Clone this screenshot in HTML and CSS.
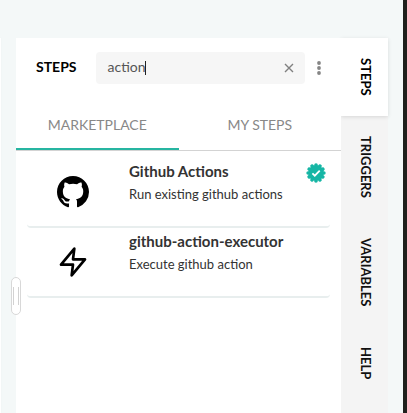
FILE: index.html
```html
<!DOCTYPE html>
<html lang="en">
<head>
<meta charset="utf-8">
<title>Steps</title>
<link rel="stylesheet" href="styles.css">
</head>
<body>
<div class="app">
  <div class="canvas-edge"></div>
  <aside class="panel">
    <button class="resize-handle" aria-label="Resize"></button>
    <header class="panel-header">
      <h1 class="panel-title">STEPS</h1>
      <div class="search">
        <span class="search-text">action</span><span class="caret"></span>
        <svg class="clear" viewBox="0 0 10 10"><path d="M1 1l8 8M9 1l-8 8"/></svg>
      </div>
      <svg class="more" viewBox="0 0 4 14"><circle cx="2" cy="2" r="1.9"/><circle cx="2" cy="7" r="1.9"/><circle cx="2" cy="12" r="1.9"/></svg>
    </header>
    <nav class="tabs">
      <div class="tab tab-active">MARKETPLACE</div>
      <div class="tab">MY STEPS</div>
    </nav>
    <div class="list">
      <article class="card">
        <svg class="card-icon" viewBox="0 0 16 16"><path d="M8 0C3.58 0 0 3.58 0 8c0 3.54 2.29 6.53 5.47 7.59.4.07.55-.17.55-.38 0-.19-.01-.82-.01-1.49-2.01.37-2.53-.49-2.69-.94-.09-.23-.48-.94-.82-1.13-.28-.15-.68-.52-.01-.53.63-.01 1.08.58 1.23.82.72 1.21 1.87.87 2.33.66.07-.52.28-.87.51-1.07-1.78-.2-3.64-.89-3.64-3.95 0-.87.31-1.59.82-2.15-.08-.2-.36-1.02.08-2.12 0 0 .67-.21 2.2.82.64-.18 1.32-.27 2-.27s1.36.09 2 .27c1.53-1.04 2.2-.82 2.2-.82.44 1.1.16 1.92.08 2.12.51.56.82 1.27.82 2.15 0 3.07-1.87 3.75-3.65 3.95.29.25.54.73.54 1.48 0 1.07-.01 1.93-.01 2.2 0 .21.15.46.55.38A8.01 8.01 0 0 0 16 8c0-4.42-3.58-8-8-8z"/></svg>
        <div class="card-body">
          <h2 class="card-title">Github Actions</h2>
          <p class="card-text">Run existing github actions</p>
        </div>
        <svg class="verified" viewBox="0 0 20 20"><circle class="seal" cx="10" cy="10" r="7.9" pathLength="12"/><path class="check" d="M6.4 10.4l2.4 2.3 4.9-5"/></svg>
      </article>
      <article class="card">
        <svg class="card-icon bolt" viewBox="0 0 24 24"><path d="M13 2L3 14h9l-1 8 10-12h-9z"/></svg>
        <div class="card-body">
          <h2 class="card-title">github-action-executor</h2>
          <p class="card-text">Execute github action</p>
        </div>
      </article>
    </div>
  </aside>
  <nav class="rail">
    <div class="rail-item rail-active">STEPS</div>
    <div class="rail-item">TRIGGERS</div>
    <div class="rail-item">VARIABLES</div>
    <div class="rail-item">HELP</div>
  </nav>
  <div class="window-edge"></div>
</div>
</body>
</html>
```
FILE: styles.css
```css
* { box-sizing: border-box; margin: 0; }
body { overflow: hidden; background: #f4f8f8; font-family: Lato, sans-serif; }
.app { display: flex; height: 413px; }
.canvas-edge { width: 1px; margin: 38px 15px 0 0; background: #fff; box-shadow: 0 0 2px #e9eeee; }
.panel { position: relative; width: 325px; margin-top: 38px; background: #fff; }
.panel-header { display: flex; align-items: center; height: 60px; padding-left: 20px; }
.panel-title { width: 60px; padding-bottom: 2px; font-size: 14px; font-weight: 700; line-height: 20px; color: #000; }
.search { display: flex; align-items: center; width: 209px; height: 32px; padding: 0 11px 0 11.5px; border-radius: 4px; background: #f6f6f6; font-size: 14px; line-height: 20px; color: #555; }
.search-text { margin-top: -2px; }
.caret { width: 1px; height: 14px; margin-left: -1px; background: #222; }
.clear { width: 10px; height: 10px; margin-left: auto; fill: none; stroke: #808080; stroke-width: 1.4; }
.more { width: 4px; height: 14px; margin-left: 12px; fill: #858585; }
.tabs { display: flex; height: 53px; border-bottom: 1px solid #d3d3d3; }
.tab { flex: 1; height: 52px; padding-top: 17px; text-align: center; font-size: 14px; line-height: 20px; color: #888; }
.tab-active { border-bottom: 2px solid #26b5a1; }
.list { padding: 7px 11px 0; }
.card { display: flex; height: 70px; padding: 5px 4px 0 30px; border-bottom: 2px solid #e8eeee; border-radius: 4px; }
.card-icon { width: 32px; height: 32px; margin-top: 13px; }
.bolt { fill: none; stroke: #000; stroke-width: 2; stroke-linejoin: round; }
.card-body { flex: 1; margin: -2px 0 0 40px; color: #333; }
.card-title { font-size: 15px; font-weight: 700; line-height: 20px; white-space: nowrap; }
.card-text { margin-top: 3px; font-size: 13px; line-height: 20px; }
.verified { width: 20px; height: 20px; }
.seal { fill: #16b6a5; stroke: #16b6a5; stroke-width: 3.6; stroke-linecap: round; stroke-dasharray: 0.01 0.99; }
.check { fill: none; stroke: #fff; stroke-width: 1.8; }
.rail { width: 47px; margin: 38px 15px 0 0; background: #f4f4f4; }
.rail-item { width: 47px; padding: 20px 1px 20.2px 0; writing-mode: vertical-rl; line-height: 43px; font-size: 13px; font-weight: 700; color: #111; }
.rail-active { background: #fff; color: #000; box-shadow: 0 1px 4px rgba(0,0,0,.12); }
.window-edge { width: 4px; background: #20201c; }
.resize-handle { position: absolute; left: -5px; top: 239px; width: 10px; height: 38px; padding: 0; border: 1px solid #d8d8d8; border-radius: 5px; background: #fff; }
.resize-handle::before { content: ""; display: block; width: 4px; height: 18px; margin: auto; border: solid #d2d2d2; border-width: 0 1px; }
```
